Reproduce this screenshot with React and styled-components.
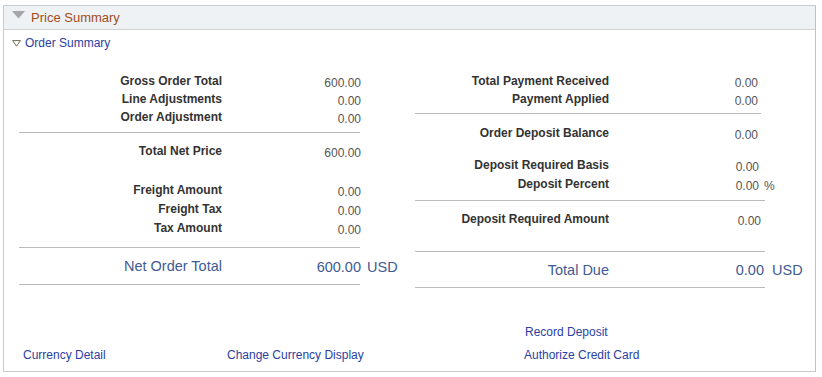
import React from "react";
import styled, { createGlobalStyle } from "styled-components";

const Global = createGlobalStyle`
  html, body { margin: 0; padding: 0; background: #ffffff; }
  body { font-family: "Liberation Sans", Arial, sans-serif; }
`;

const Panel = styled.section`
  box-sizing: border-box;
  margin: 5px 0 0 3px;
  width: 813px;
  height: 367px;
  border: 1px solid #c9cbcd;
  border-right-color: #bfc1c3;
  display: flex;
  flex-direction: column;
`;

const Header = styled.div`
  box-sizing: border-box;
  height: 24px;
  background: #eef2f4;
  border-bottom: 1px solid #cfd3d6;
  display: flex;
  align-items: center;
  gap: 6px;
  padding-left: 8px;
  padding-top: 1px;
`;

const ArrowBox = styled.span`
  align-self: flex-start;
  margin-top: 4px;
  display: flex;
`;

const HeaderTitle = styled.span`
  font-size: 13px;
  color: #a44d20;
  line-height: 16px;
`;

const SubHeader = styled.div`
  display: flex;
  align-items: center;
  gap: 4px;
  margin-top: 5px;
  padding-left: 8px;
  height: 16px;
`;

const Link = styled.a`
  font-size: 12px;
  line-height: 16px;
  color: #2a3ea4;
  text-decoration: none;
  cursor: pointer;
  margin-left: ${(p) => p.$ml || 0}px;
`;

const Columns = styled.div`
  display: grid;
  grid-template-columns: 396px 1fr;
  padding-left: 15px;
  margin-top: 21px;
`;

const Column = styled.div`
  display: flex;
  flex-direction: column;
`;

const Row = styled.div`
  display: grid;
  grid-template-columns: ${(p) => p.$label}px ${(p) => p.$value}px auto;
  height: ${(p) => p.$h || 18}px;
  margin-top: ${(p) => p.$mt || 0}px;
  align-items: ${(p) => (p.$big ? "center" : "start")};
`;

const Label = styled.div`
  text-align: right;
  font-size: ${(p) => (p.$big ? "14.5px" : "12px")};
  font-weight: ${(p) => (p.$big ? 400 : 700)};
  color: ${(p) => (p.$big ? "#3f5b92" : "#333333")};
  line-height: ${(p) => (p.$big ? "18px" : "17px")};
  padding-top: ${(p) => (p.$big ? 0 : 1)}px;
  white-space: nowrap;
`;

const Value = styled.div`
  text-align: right;
  font-size: ${(p) => (p.$big ? "14.5px" : "12px")};
  color: ${(p) => (p.$big ? "#3f5b92" : "#555555")};
  line-height: ${(p) => (p.$big ? "18px" : "14px")};
  padding-top: ${(p) => (p.$big ? 1 : 4)}px;
  margin-right: ${(p) => p.$shift || 0}px;
  white-space: nowrap;
`;

const Unit = styled.div`
  font-size: ${(p) => (p.$big ? "14.5px" : "12px")};
  color: ${(p) => (p.$big ? "#3f5b92" : "#555555")};
  line-height: ${(p) => (p.$big ? "18px" : "14px")};
  padding-top: ${(p) => (p.$big ? 1 : 4)}px;
  padding-left: ${(p) => p.$pl || 6}px;
  white-space: nowrap;
`;

const Divider = styled.div`
  width: ${(p) => p.$w}px;
  height: 1px;
  background: #bcbcbc;
  margin-top: ${(p) => p.$mt || 0}px;
`;

const Footer = styled.div`
  margin-top: auto;
  padding: 0 0 8px 19px;
  display: grid;
  grid-template-columns: 204px 297px auto;
  row-gap: 7px;
`;

const Empty = styled.span``;

const HeaderArrow = () => (
  <svg width="13" height="8" viewBox="0 0 13 8">
    <polygon points="0,0 13,0 6.5,7.5" fill="#a4a6a8" />
  </svg>
);

const SubArrow = () => (
  <svg width="9" height="7" viewBox="0 0 9 7">
    <polygon points="0.6,0.6 8.4,0.6 4.5,6.2" fill="none" stroke="#6e6a52" strokeWidth="1" />
  </svg>
);

const L = { label: 203, value: 139 };
const R = { label: 194, value: 150 };

const SmallRow = ({ cfg, label, value, unit, mt, shift }) => (
  <Row $label={cfg.label} $value={cfg.value} $mt={mt}>
    <Label>{label}</Label>
    <Value $shift={shift}>{value}</Value>
    {unit ? <Unit $pl={5}>{unit}</Unit> : <span />}
  </Row>
);

const BigRow = ({ cfg, label, value, unit, h, shift, pl }) => (
  <Row $label={cfg.label} $value={cfg.value} $h={h} $big>
    <Label $big>{label}</Label>
    <Value $big $shift={shift}>{value}</Value>
    <Unit $big $pl={pl}>{unit}</Unit>
  </Row>
);

export default function App() {
  return (
    <>
      <Global />
      <Panel>
        <Header>
          <ArrowBox>
            <HeaderArrow />
          </ArrowBox>
          <HeaderTitle>Price Summary</HeaderTitle>
        </Header>
        <SubHeader>
          <SubArrow />
          <Link>Order Summary</Link>
        </SubHeader>
        <Columns>
          <Column>
            <SmallRow cfg={L} label="Gross Order Total" value="600.00" />
            <SmallRow cfg={L} label="Line Adjustments" value="0.00" />
            <SmallRow cfg={L} label="Order Adjustment" value="0.00" />
            <Divider $w={341} $mt={6} />
            <SmallRow cfg={L} label="Total Net Price" value="600.00" mt={9} />
            <SmallRow cfg={L} label="Freight Amount" value="0.00" mt={21} />
            <SmallRow cfg={L} label="Freight Tax" value="0.00" mt={1} />
            <SmallRow cfg={L} label="Tax Amount" value="0.00" mt={1} />
            <Divider $w={341} $mt={10} />
            <BigRow cfg={L} label="Net Order Total" value="600.00" unit="USD" h={36} pl={6} />
            <Divider $w={341} />
          </Column>
          <Column>
            <SmallRow cfg={R} label="Total Payment Received" value="0.00" shift={1} />
            <SmallRow cfg={R} label="Payment Applied" value="0.00" shift={1} />
            <Divider $w={346} $mt={5} />
            <SmallRow cfg={R} label="Order Deposit Balance" value="0.00" mt={10} shift={1} />
            <SmallRow cfg={R} label="Deposit Required Basis" value="0.00" mt={14} />
            <SmallRow cfg={R} label="Deposit Percent" value="0.00" unit="%" mt={1} />
            <Divider $w={350} $mt={7} />
            <SmallRow cfg={R} label="Deposit Required Amount" value="0.00" mt={9} shift={-2} />
            <Divider $w={350} $mt={23} />
            <BigRow cfg={R} label="Total Due" value="0.00" unit="USD" h={35} shift={-5} pl={13} />
            <Divider $w={350} />
          </Column>
        </Columns>
        <Footer>
          <Empty />
          <Empty />
          <Link $ml={1}>Record Deposit</Link>
          <Link>Currency Detail</Link>
          <Link>Change Currency Display</Link>
          <Link>Authorize Credit Card</Link>
        </Footer>
      </Panel>
    </>
  );
}
